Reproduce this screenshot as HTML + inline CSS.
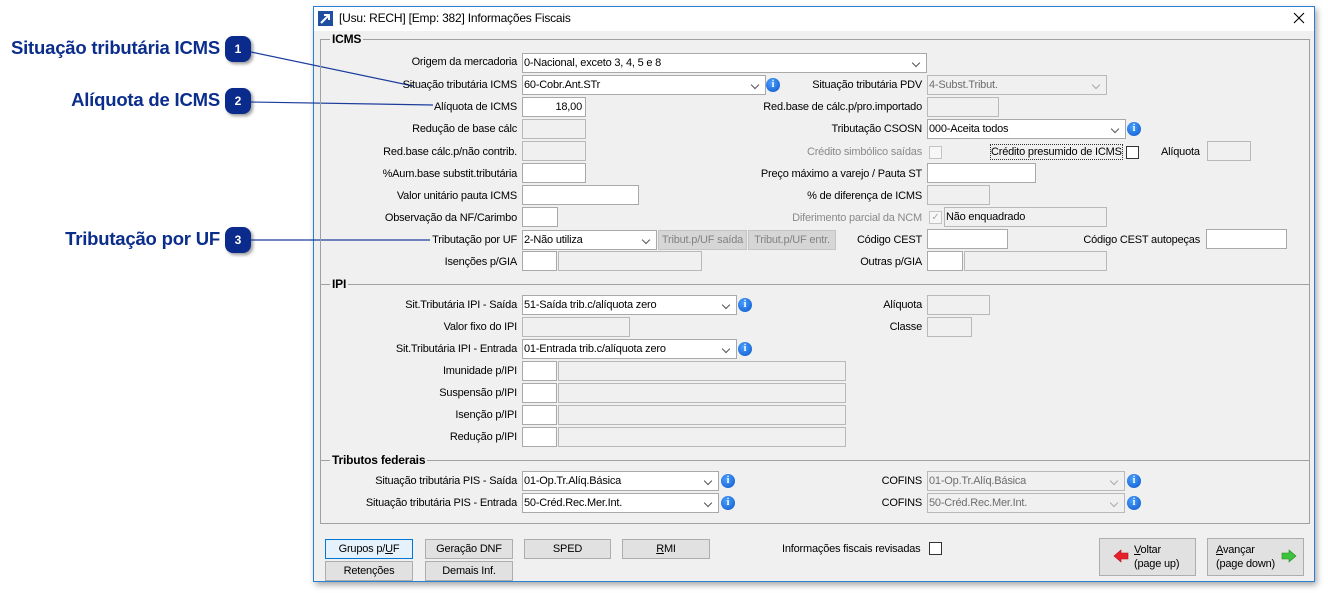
<!DOCTYPE html>
<html><head><meta charset="utf-8">
<style>
*{box-sizing:border-box;margin:0;padding:0}
body{width:1328px;height:593px;background:#fff;position:relative;overflow:hidden;font-family:"Liberation Sans",Arial,sans-serif;font-size:11px;letter-spacing:-0.2px;color:#000}
.a{position:absolute}
.win{left:313px;top:6px;width:1002px;height:576px;border:1px solid #2b7fd4;background:#f0f0f0;box-shadow:2px 3px 6px rgba(0,0,0,.35)}
.tb{left:314px;top:7px;width:1000px;height:24px;background:#fff}
.fr{left:320px;top:39px;width:990px;height:485px;border:1px solid #a0a0a0}
.lb{position:absolute;white-space:nowrap;line-height:14px}
.gy{color:#8a8a8a}
.w{position:absolute;background:#fff;border:1px solid #a9a9a9;height:20px;line-height:19px;padding-left:1px;white-space:nowrap;overflow:hidden}
.g{position:absolute;background:#f0f0f0;border:1px solid #b9b9b9;height:20px;line-height:19px;padding-left:1px;white-space:nowrap;overflow:hidden;color:#6d6d6d}
.dd::after{content:"";position:absolute;right:7px;top:6px;width:5px;height:5px;border-right:1px solid #555;border-bottom:1px solid #555;transform:rotate(45deg)}
.g.dd::after{border-color:#aaa}
.inf{position:absolute;width:14px;height:14px;border-radius:50%;background:radial-gradient(circle at 40% 35%,#4aa0ff,#0b56c8);color:#fff;font:bold 10px "Liberation Serif",serif;text-align:center;line-height:14px;letter-spacing:0}
.cb{position:absolute;width:13px;height:13px;border:1px solid #333;background:#fff}
.cbd{position:absolute;width:13px;height:13px;border:1px solid #c4c4c4;background:#f7f7f7}
.sec{position:absolute;left:321px;width:988px;height:1px;background:#a0a0a0}
.leg{position:absolute;font-weight:bold;background:#f0f0f0;padding:0 2px;line-height:14px;font-size:12px}
.bt{position:absolute;background:#e1e1e1;border:1px solid #adadad;text-align:center;line-height:18px;height:20px}
.btd{position:absolute;background:#d6d6d6;border:1px solid #c4c4c4;text-align:center;color:#838383;line-height:18px;height:20px}
.ann{position:absolute;font-weight:bold;color:#0b2d8c;font-size:18.5px;letter-spacing:-0.2px;white-space:nowrap}
.bdg{position:absolute;width:26px;height:26px;border-radius:8px;background:#0a2a8c;color:#fff;font-weight:bold;font-size:12px;text-align:center;line-height:26px;letter-spacing:0;box-shadow:2px 2px 3px rgba(0,0,0,.4)}
</style></head><body>

<div class="ann" style="right:1108px;top:37px">Situação tributária ICMS</div>
<div class="bdg" style="left:225px;top:36px">1</div>
<div class="ann" style="right:1108px;top:89px">Alíquota de ICMS</div>
<div class="bdg" style="left:225px;top:88px">2</div>
<div class="ann" style="right:1108px;top:228px">Tributação por UF</div>
<div class="bdg" style="left:225px;top:227px">3</div>

<div class="a win"></div>
<div class="a tb"></div>
<svg class="a" style="left:318px;top:11px" width="15" height="15"><rect width="15" height="15" fill="#1f4fa0"/><path d="M3 12 L11 4 M6 4 H11 V9" stroke="#fff" stroke-width="2" fill="none"/></svg>
<div class="lb" style="left:339px;top:11px;font-size:12px">[Usu: RECH] [Emp: 382] Informações Fiscais</div>
<svg class="a" style="left:1293px;top:12px" width="12" height="12"><path d="M1 1 L11 11 M11 1 L1 11" stroke="#000" stroke-width="1.1"/></svg>

<svg class="a" style="left:0;top:0" width="1328" height="593"><g stroke="#1a3d9c" stroke-width="1.2"><line x1="251" y1="52" x2="413" y2="86"/><line x1="251" y1="102" x2="433" y2="105"/><line x1="251" y1="240" x2="430" y2="240"/></g></svg>

<div class="a fr"></div>
<div class="leg" style="left:330px;top:32px">ICMS</div>

<div class="lb" style="right:811px;top:55px">Origem da mercadoria</div>
<div class="w dd" style="left:522px;top:53px;width:405px">0-Nacional, exceto 3, 4, 5 e 8</div>

<div class="lb" style="right:811px;top:78px">Situação tributária ICMS</div>
<div class="w dd" style="left:522px;top:75px;width:244px">60-Cobr.Ant.STr</div>
<div class="inf" style="left:766px;top:78px">i</div>
<div class="lb" style="right:406px;top:78px">Situação tributária PDV</div>
<div class="g dd" style="left:927px;top:75px;width:180px">4-Subst.Tribut.</div>

<div class="lb" style="right:811px;top:100px">Alíquota de ICMS</div>
<div class="w" style="left:522px;top:97px;width:64px;text-align:right;padding-right:3px">18,00</div>
<div class="lb" style="right:406px;top:100px">Red.base de cálc.p/pro.importado</div>
<div class="g" style="left:927px;top:97px;width:72px"></div>

<div class="lb" style="right:811px;top:122px">Redução de base cálc</div>
<div class="g" style="left:522px;top:119px;width:64px"></div>
<div class="lb" style="right:406px;top:122px">Tributação CSOSN</div>
<div class="w dd" style="left:927px;top:119px;width:199px">000-Aceita todos</div>
<div class="inf" style="left:1127px;top:122px">i</div>

<div class="lb" style="right:811px;top:145px">Red.base cálc.p/não contrib.</div>
<div class="g" style="left:522px;top:141px;width:64px"></div>
<div class="lb gy" style="right:406px;top:145px">Crédito simbólico saídas</div>
<div class="cbd" style="left:929px;top:146px"></div>
<div class="lb" style="left:991px;top:145px;outline:1px dotted #333">Crédito presumido de ICMS</div>
<div class="cb" style="left:1126px;top:146px"></div>
<div class="lb" style="left:1161px;top:145px">Alíquota</div>
<div class="g" style="left:1207px;top:141px;width:44px"></div>

<div class="lb" style="right:811px;top:167px">%Aum.base substit.tributária</div>
<div class="w" style="left:522px;top:163px;width:64px"></div>
<div class="lb" style="right:406px;top:167px">Preço máximo a varejo / Pauta ST</div>
<div class="w" style="left:927px;top:163px;width:109px"></div>

<div class="lb" style="right:811px;top:189px">Valor unitário pauta ICMS</div>
<div class="w" style="left:522px;top:185px;width:117px"></div>
<div class="lb" style="right:406px;top:189px">% de diferença de ICMS</div>
<div class="g" style="left:927px;top:185px;width:63px"></div>

<div class="lb" style="right:811px;top:211px">Observação da NF/Carimbo</div>
<div class="w" style="left:522px;top:207px;width:36px"></div>
<div class="lb gy" style="right:406px;top:211px">Diferimento parcial da NCM</div>
<div class="cbd" style="left:929px;top:211px;color:#aaa;font-size:10px;line-height:11px;text-align:center">✓</div>
<div class="g" style="left:944px;top:207px;width:163px;color:#000">Não enquadrado</div>

<div class="lb" style="right:811px;top:233px">Tributação por UF</div>
<div class="w dd" style="left:522px;top:230px;width:135px">2-Não utiliza</div>
<div class="btd" style="left:658px;top:230px;width:89px">Tribut.p/UF saída</div>
<div class="btd" style="left:748px;top:230px;width:88px">Tribut.p/UF entr.</div>
<div class="lb" style="right:406px;top:233px">Código CEST</div>
<div class="w" style="left:927px;top:229px;width:81px"></div>
<div class="lb" style="right:128px;top:233px">Código CEST autopeças</div>
<div class="w" style="left:1206px;top:229px;width:81px"></div>

<div class="lb" style="right:811px;top:255px">Isenções p/GIA</div>
<div class="w" style="left:522px;top:251px;width:35px"></div>
<div class="g" style="left:558px;top:251px;width:144px"></div>
<div class="lb" style="right:406px;top:255px">Outras p/GIA</div>
<div class="w" style="left:927px;top:251px;width:36px"></div>
<div class="g" style="left:964px;top:251px;width:143px"></div>

<div class="sec" style="top:284px"></div>
<div class="leg" style="left:330px;top:277px">IPI</div>

<div class="lb" style="right:811px;top:298px">Sit.Tributária IPI - Saída</div>
<div class="w dd" style="left:522px;top:295px;width:215px">51-Saída trib.c/alíquota zero</div>
<div class="inf" style="left:738px;top:298px">i</div>
<div class="lb" style="right:406px;top:298px">Alíquota</div>
<div class="g" style="left:927px;top:295px;width:63px"></div>

<div class="lb" style="right:811px;top:320px">Valor fixo do IPI</div>
<div class="g" style="left:522px;top:317px;width:108px"></div>
<div class="lb" style="right:406px;top:320px">Classe</div>
<div class="g" style="left:927px;top:317px;width:45px"></div>

<div class="lb" style="right:811px;top:342px">Sit.Tributária IPI - Entrada</div>
<div class="w dd" style="left:522px;top:339px;width:215px">01-Entrada trib.c/alíquota zero</div>
<div class="inf" style="left:738px;top:342px">i</div>

<div class="lb" style="right:811px;top:364px">Imunidade p/IPI</div>
<div class="w" style="left:522px;top:361px;width:35px"></div><div class="g" style="left:558px;top:361px;width:288px"></div>
<div class="lb" style="right:811px;top:386px">Suspensão p/IPI</div>
<div class="w" style="left:522px;top:383px;width:35px"></div><div class="g" style="left:558px;top:383px;width:288px"></div>
<div class="lb" style="right:811px;top:408px">Isenção p/IPI</div>
<div class="w" style="left:522px;top:405px;width:35px"></div><div class="g" style="left:558px;top:405px;width:288px"></div>
<div class="lb" style="right:811px;top:430px">Redução p/IPI</div>
<div class="w" style="left:522px;top:427px;width:35px"></div><div class="g" style="left:558px;top:427px;width:288px"></div>

<div class="sec" style="top:460px"></div>
<div class="leg" style="left:330px;top:453px">Tributos federais</div>

<div class="lb" style="right:811px;top:474px">Situação tributária PIS - Saída</div>
<div class="w dd" style="left:522px;top:471px;width:197px">01-Op.Tr.Alíq.Básica</div>
<div class="inf" style="left:721px;top:474px">i</div>
<div class="lb" style="right:406px;top:474px">COFINS</div>
<div class="g dd" style="left:927px;top:471px;width:198px">01-Op.Tr.Alíq.Básica</div>
<div class="inf" style="left:1127px;top:474px">i</div>

<div class="lb" style="right:811px;top:496px">Situação tributária PIS - Entrada</div>
<div class="w dd" style="left:522px;top:493px;width:197px">50-Créd.Rec.Mer.Int.</div>
<div class="inf" style="left:721px;top:496px">i</div>
<div class="lb" style="right:406px;top:496px">COFINS</div>
<div class="g dd" style="left:927px;top:493px;width:198px">50-Créd.Rec.Mer.Int.</div>
<div class="inf" style="left:1127px;top:496px">i</div>

<div class="bt" style="left:325px;top:539px;width:88px;border-color:#0078d7;background:#e5f1fb">Grupos p/<u>U</u>F</div>
<div class="bt" style="left:425px;top:539px;width:88px">Geração DNF</div>
<div class="bt" style="left:524px;top:539px;width:87px">SPED</div>
<div class="bt" style="left:622px;top:539px;width:88px"><u>R</u>MI</div>
<div class="bt" style="left:325px;top:561px;width:88px">Retenções</div>
<div class="bt" style="left:425px;top:561px;width:88px">Demais Inf.</div>
<div class="lb" style="left:782px;top:542px">Informações fiscais revisadas</div>
<div class="cb" style="left:929px;top:542px"></div>

<div class="bt" style="left:1099px;top:538px;width:97px;height:38px;text-align:left;line-height:14px;padding:4px 0 0 34px"><u>V</u>oltar<br>(page up)</div>
<svg class="a" style="left:1113px;top:549px" width="16" height="14"><path d="M1 7 L8 1 V4 H15 V10 H8 V13 Z" fill="#e8202a" stroke="#b01018" stroke-width=".6"/></svg>
<div class="bt" style="left:1207px;top:538px;width:97px;height:38px;text-align:left;line-height:14px;padding:4px 0 0 8px"><u>A</u>vançar<br>(page down)</div>
<svg class="a" style="left:1281px;top:549px" width="16" height="14"><path d="M15 7 L8 1 V4 H1 V10 H8 V13 Z" fill="#3cc23c" stroke="#208a20" stroke-width=".6"/></svg>

</body></html>
